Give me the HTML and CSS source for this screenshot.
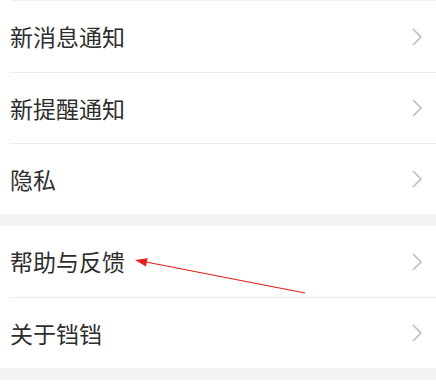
FILE: index.html
```html
<!DOCTYPE html>
<html lang="zh-CN">
<head>
    <meta charset="UTF-8">
    <meta name="viewport" content="width=device-width, initial-scale=1.0">
    <title>设置</title>
    <link rel="stylesheet" href="styles.css">
</head>
<body>
    <div class="page">
        <ul class="group">
            <li class="item first-line"><span class="label">新消息通知</span><svg class="chevron" viewBox="0 0 12 20"><polyline points="2,2 10,10 2,18"/></svg></li>
            <li class="item"><span class="label">新提醒通知</span><svg class="chevron" viewBox="0 0 12 20"><polyline points="2,2 10,10 2,18"/></svg></li>
            <li class="item"><span class="label">隐私</span><svg class="chevron" viewBox="0 0 12 20"><polyline points="2,2 10,10 2,18"/></svg></li>
        </ul>
        <ul class="group">
            <li class="item"><span class="label">帮助与反馈</span><svg class="chevron" viewBox="0 0 12 20"><polyline points="2,2 10,10 2,18"/></svg></li>
            <li class="item"><span class="label">关于铛铛</span><svg class="chevron" viewBox="0 0 12 20"><polyline points="2,2 10,10 2,18"/></svg></li>
        </ul>
        <div class="group filler"></div>

        <!-- annotation arrow pointing at 帮助与反馈 -->
        <svg class="annotation" width="436" height="385" viewBox="0 0 436 385">
            <line x1="305" y1="293" x2="146" y2="262" />
            <polygon points="135,260 147.6,258.2 146,266.4" />
        </svg>
    </div>
</body>
</html>
```

FILE: styles.css
```css
body {
    margin: 0;
    padding: 0;
    font-family: "Noto Sans CJK SC", "Noto Sans", sans-serif;
    color: #2e2e2e;
    background: #f2f2f2;
}
.page {
    position: relative;
    width: 436px;
    height: 385px;
    overflow: hidden;
    background: #f2f2f2;
}
.group {
    list-style: none;
    margin: 0 0 12px 0;
    padding: 0;
    background: #fff;
}
.group.filler {
    height: 40px;
    margin: 0;
}
.item {
    display: flex;
    align-items: center;
    justify-content: space-between;
    box-sizing: border-box;
    height: 71px;
    margin-left: 10px;
    padding-right: 13px;
    border-top: 1px solid #ececec;
}
.group .item:first-child {
    border-top: none;
}
.group .item.first-line {
    border-top: 1px solid #f0f0f0;
    height: 72px;
}
.label {
    font-size: 23px;
    line-height: 1;
}
.chevron {
    width: 12px;
    height: 20px;
}
.chevron polyline {
    fill: none;
    stroke: #bdbdbd;
    stroke-width: 1.6;
}
.annotation {
    position: absolute;
    left: 0;
    top: 0;
    pointer-events: none;
}
.annotation line {
    stroke: #e01e1e;
    stroke-width: 1.2;
}
.annotation polygon {
    fill: #e01e1e;
}
```
